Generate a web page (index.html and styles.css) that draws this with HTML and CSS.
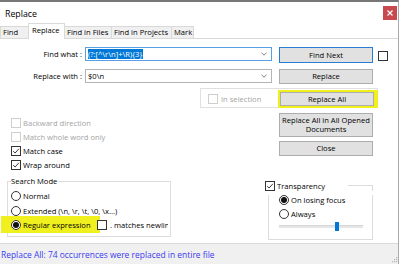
FILE: index.html
```html
<!DOCTYPE html>
<html>
<head>
<meta charset="utf-8">
<link rel="stylesheet" href="styles.css">
</head>
<body>
<div class="win">
  <div class="titlebar">
    <span class="title">Replace</span>
    <span class="close"><svg width="6" height="6" viewBox="0 0 6 6"><path d="M0.5 0.5 L5.5 5.5 M5.5 0.5 L0.5 5.5" stroke="#fff" stroke-width="1.2"/></svg></span>
  </div>
  <div class="tabs">
    <div class="tab t-find">Find</div>
    <div class="tab active t-repl">Replace</div>
    <div class="tab t-files">Find in Files</div>
    <div class="tab t-proj">Find in Projects</div>
    <div class="tab t-mark">Mark</div>
  </div>
  <div class="panel">
    <div class="row row-find">
      <span class="lbl">Find what :</span>
      <div class="combo focus"><span class="sel">(?:[^\r\n]+\R){3}</span><svg class="chev" width="6" height="4" viewBox="0 0 6 4"><path d="M0.5 0.8 L3 3.2 L5.5 0.8" fill="none" stroke="#606060" stroke-width="0.8"/></svg></div>
      <button class="btn default h16">Find Next</button>
      <span class="cb cb-side"></span>
    </div>
    <div class="row row-repl">
      <span class="lbl">Replace with :</span>
      <div class="combo"><span class="val">$0\n</span><svg class="chev" width="6" height="4" viewBox="0 0 6 4"><path d="M0.5 0.8 L3 3.2 L5.5 0.8" fill="none" stroke="#606060" stroke-width="0.8"/></svg></div>
      <button class="btn h15">Replace</button>
    </div>
    <div class="insel">
      <span class="cb dis"></span>
      <span class="distext">In selection</span>
      <div class="hl hl-all"><button class="btn h14">Replace All</button></div>
    </div>
    <div class="lower">
      <div class="leftcol">
        <div class="chk"><span class="cb dis"></span><span class="distext">Backward direction</span></div>
        <div class="chk"><span class="cb dis"></span><span class="distext">Match whole word only</span></div>
        <div class="chk"><span class="cb"><svg width="8" height="8" viewBox="0 0 8 8"><path d="M1.2 4.2 L3.1 6 L6.9 1.8" fill="none" stroke="#222" stroke-width="0.9"/></svg></span><span>Match case</span></div>
        <div class="chk"><span class="cb"><svg width="8" height="8" viewBox="0 0 8 8"><path d="M1.2 4.2 L3.1 6 L6.9 1.8" fill="none" stroke="#222" stroke-width="0.9"/></svg></span><span>Wrap around</span></div>
        <fieldset class="group">
          <legend>Search Mode</legend>
          <div class="rad r1"><span class="radio"></span><span>Normal</span></div>
          <div class="rad r2"><span class="radio"></span><span>Extended (\n, \r, \t, \0, \x...)</span></div>
          <div class="rad r3">
            <div class="hl hl-rx"><span class="radio on"></span><span>Regular expression</span></div>
            <span class="cb cb-nl"></span>
            <span class="clip">. matches newline</span>
          </div>
        </fieldset>
      </div>
      <div class="rightcol">
        <button class="btn two">Replace All in All Opened<br>Documents</button>
        <button class="btn h15 closebtn">Close</button>
        <div class="tgroup">
          <div class="thead">
            <div class="tleg"><span class="cb"><svg width="8" height="8" viewBox="0 0 8 8"><path d="M1.2 4.2 L3.1 6 L6.9 1.8" fill="none" stroke="#222" stroke-width="0.9"/></svg></span><span>Transparency</span></div>
            <div class="tline"></div>
          </div>
          <div class="tbody">
            <div class="rad t1"><span class="radio on"></span><span>On losing focus</span></div>
            <div class="rad t2"><span class="radio"></span><span>Always</span></div>
            <div class="slider"><div class="track tl"></div><div class="thumb"></div><div class="track tr"></div></div>
          </div>
        </div>
      </div>
    </div>
  </div>
  <div class="status">
    <span class="stext">Replace All: 74 occurrences were replaced in entire file</span>
    <svg class="grip" width="7" height="7" viewBox="0 0 7 7"><g fill="#b8b8b8"><rect x="5" y="1" width="1.2" height="1.2"/><rect x="3" y="3" width="1.2" height="1.2"/><rect x="5" y="3" width="1.2" height="1.2"/><rect x="1" y="5" width="1.2" height="1.2"/><rect x="3" y="5" width="1.2" height="1.2"/><rect x="5" y="5" width="1.2" height="1.2"/></g></svg>
  </div>
</div>
</body>
</html>
```

FILE: styles.css
```css
* { box-sizing: border-box; }
html, body { margin: 0; padding: 0; background: #fff; }
body {
  font-family: "Open Sans", "Noto Sans", sans-serif;
  font-size: 7.6px;
  color: #000;
}
.win {
  width: 399px;
  height: 264px;
  border-top: 2px solid #777;
  border-right: 1px solid #aaa;
  display: flex;
  flex-direction: column;
  overflow: hidden;
}
.titlebar {
  height: 21px;
  display: flex;
  justify-content: space-between;
  align-items: flex-start;
  padding: 0 1px 0 5px;
}
.title { font-size: 8.8px; line-height: 10px; margin-top: 7px; }
.close {
  width: 14px; height: 14px; margin-top: 4px;
  background: #c94a4e;
  display: flex; align-items: center; justify-content: center;
}
.tabs {
  height: 16px;
  display: flex;
  align-items: flex-end;
  border-bottom: 1px solid #d9d9d9;
}
.tab {
  height: 12px;
  line-height: 11px;
  background: #f0f0f0;
  border: 1px solid #d9d9d9;
  border-bottom: none;
  margin-right: -1px;
  padding-left: 2px;
  white-space: nowrap;
}
.tab.active {
  height: 16px;
  line-height: 13px;
  background: #fff;
  margin-bottom: -1px;
  position: relative;
  padding-left: 3px;
}
.t-find { width: 29px; }
.t-repl { width: 37px; }
.t-files { width: 48px; }
.t-proj { width: 61px; }
.t-mark { width: 23px; }
.panel {
  flex: 1;
  padding-top: 8px;
  display: flex;
  flex-direction: column;
}
.row { display: flex; align-items: flex-start; }
.row-repl { margin-top: 6px; }
.lbl {
  width: 85px;
  padding-right: 3px;
  text-align: right;
  line-height: 14px;
  white-space: nowrap;
}
.combo {
  width: 187px;
  height: 14px;
  border: 1px solid #b4b4b4;
  display: flex;
  align-items: center;
  padding-left: 2px;
  white-space: nowrap;
}
.combo.focus { border-color: #5b9fe3; }
.sel { background: #0078d7; color: #fff; line-height: 10px; padding: 0 1px 0 0; }
.val { line-height: 10px; }
.chev { margin-left: auto; margin-right: 4px; }
.btn {
  font-family: inherit;
  font-size: inherit;
  color: #000;
  width: 94px;
  margin: 0;
  padding: 0;
  background: #e1e1e1;
  border: 1px solid #adadad;
  line-height: 9px;
  display: block;
}
.btn.default { border-color: #2a7fd4; }
.h16 { height: 16px; }
.h15 { height: 15px; }
.h14 { height: 14px; }
.row .btn { margin-left: 7px; }
.cb {
  width: 10px; height: 10px;
  border: 1px solid #333;
  background: #fff;
  display: flex; align-items: center; justify-content: center;
  flex: none;
}
.cb.dis { border-color: #cfcfcf; }
.cb-side { margin-left: 5px; margin-top: 4px; }
.distext { color: #a3a3a3; }
.insel {
  margin-top: 4px;
  margin-left: 200px;
  width: 178px;
  height: 20px;
  border: 1px solid #e0e0e0;
  display: flex;
  align-items: flex-start;
  padding-left: 7px;
}
.insel > .cb { margin-top: 5px; }
.insel > .distext { margin-left: 3px; margin-top: 5px; line-height: 10px; }
.hl { background: #f0f01e; }
.hl-all {
  margin-left: auto;
  margin-right: -1px;
  margin-top: 1px;
  width: 100px;
  height: 18px;
  padding: 2px 0 0 2px;
  position: relative;
}
.lower { display: flex; align-items: flex-start; }
.leftcol { width: 164px; margin-left: 7px; margin-top: 10px; }
.chk {
  display: flex; align-items: center;
  height: 10px; margin-bottom: 4px;
  padding-left: 4px;
  line-height: 10px;
  white-space: nowrap;
}
.chk .cb { margin-right: 2px; }
.group {
  margin: 6px 0 0 0;
  padding: 0 0 3px 3px;
  border: 1px solid #dcdcdc;
  min-width: 0;
}
.group legend {
  padding: 0 1px 0 0;
  line-height: 10px;
}
.rad {
  display: flex; align-items: center;
  height: 10px;
  line-height: 10px;
  white-space: nowrap;
}
.radio {
  width: 10px; height: 10px;
  border: 1px solid #333;
  border-radius: 50%;
  background: #fff;
  margin-right: 2px;
  display: flex; align-items: center; justify-content: center;
  flex: none;
}
.radio.on::after {
  content: "";
  width: 6px; height: 6px;
  border-radius: 50%;
  background: #111;
}
.r1 { margin-top: 5px; }
.r2 { margin-top: 5px; }
.r3 { height: 17px; margin-top: 0; }
.hl-rx {
  display: flex; align-items: center;
  height: 17px;
  width: 99px;
  margin-left: -10px;
  padding-left: 10px;
  position: relative;
}
.cb-nl { margin-left: -3px; position: relative; }
.clip {
  margin-left: 3px;
  width: 58px;
  overflow: hidden;
  white-space: nowrap;
}
.rightcol { margin-left: 94px; width: 112px; }
.rightcol .btn { margin-left: 14px; }
.btn.two { height: 24px; margin-top: 5px; line-height: 9.5px; }
.closebtn { margin-top: 4px; }
.tgroup { width: 108px; margin-top: 25px; }
.thead { display: flex; height: 10px; }
.tleg { display: flex; align-items: center; width: 83px; line-height: 10px; }
.tleg .cb { margin-right: 2px; }
.tline {
  flex: 1;
  margin-top: 4px;
  border-top: 1px solid #dcdcdc;
  border-right: 1px solid #dcdcdc;
}
.tbody {
  margin-left: 3px;
  height: 45px;
  border: 1px solid #dcdcdc;
  border-top: none;
  padding-left: 10px;
}
.t1 { margin-top: 4px; }
.t2 { margin-top: 4px; }
.slider {
  display: flex; align-items: center;
  width: 84px; height: 9px;
  margin-top: 3px;
}
.track { height: 3px; background: #e6e6e6; border-top: 1px solid #d6d6d6; }
.tl { width: 56px; }
.tr { flex: 1; }
.thumb { width: 4px; height: 9px; background: #0078d7; }
.status {
  height: 21px;
  flex: none;
  border-top: 1px solid #dadada;
  background: #f0f0f0;
  display: flex;
  align-items: center;
  padding-left: 1px;
}
.stext { color: #3a3af2; font-size: 8.45px; white-space: nowrap; }
.grip { margin-left: auto; align-self: flex-end; margin-bottom: 1px; }
```
